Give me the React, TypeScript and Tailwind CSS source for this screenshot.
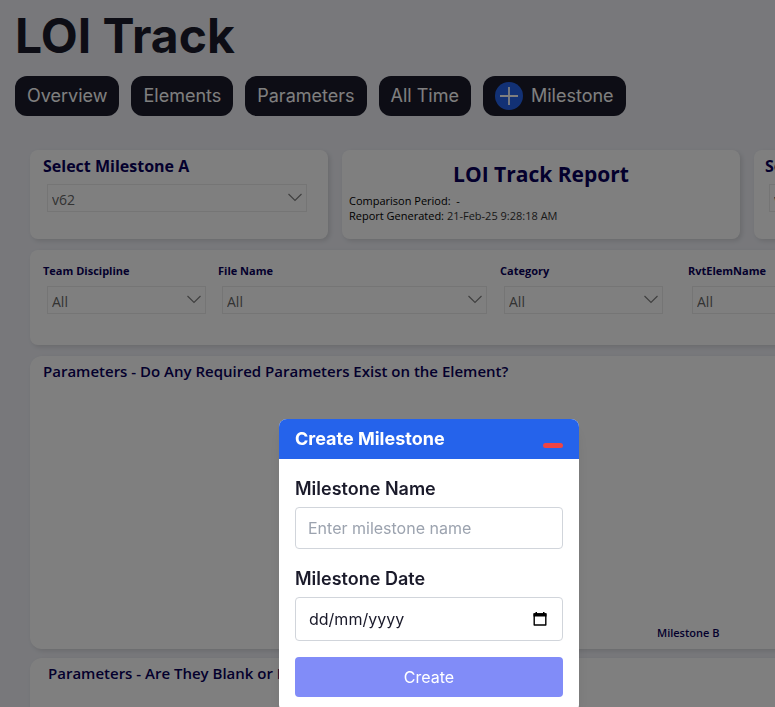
import React, { useState } from 'react'

interface FilterProps {
  id: string
  label: string
  className: string
}

const Chevron: React.FC = () => (
  <svg
    className="pointer-events-none absolute right-1 top-2 h-3 w-4"
    viewBox="0 0 16 12"
    fill="none"
    stroke="#808080"
    strokeWidth="1.2"
  >
    <path d="M1.500 2 8 8.500 14.500 2" />
  </svg>
)

const SelectBox: React.FC<{ id: string; value: string }> = ({ id, value }) => (
  <div className="relative ml-1">
    <select
      id={id}
      className="block h-7 w-full appearance-none border border-[#ebebeb] bg-white pl-1 pt-1 text-sm leading-5 text-[#666666]"
    >
      <option>{value}</option>
    </select>
    <Chevron />
  </div>
)

const Filter: React.FC<FilterProps> = ({ id, label, className }) => (
  <div className={className}>
    <label htmlFor={id} className="mb-[7px] block text-[11px] leading-4 font-bold text-[#08005a]">
      {label}
    </label>
    <SelectBox id={id} value="All" />
  </div>
)

const NavButton: React.FC<{ children: React.ReactNode }> = ({ children }) => (
  <button className="flex h-10 shrink-0 items-center gap-2 rounded-xl bg-[#1a1a2a] px-3 text-lg text-white">
    {children}
  </button>
)

const Report: React.FC = () => (
  <main className="flex w-[1024px] flex-col text-black [font-family:'Open_Sans','Noto_Sans',sans-serif]">
    <div className="mb-[11px] flex gap-[14px]">
      <section className="h-[89px] w-[298px] shrink-0 rounded-lg bg-white pl-[13px] pr-[21px] pt-[3px] shadow-[2px_2px_5px_rgba(0,0,0,0.12)]">
        <label htmlFor="milestone-a" className="mb-[5px] block text-base leading-[26px] font-bold text-[#08005a]">
          Select Milestone A
        </label>
        <SelectBox id="milestone-a" value="v62" />
      </section>
      <section className="h-[89px] w-[398px] shrink-0 rounded-lg bg-white px-[7px] pt-2 shadow-[2px_2px_5px_rgba(0,0,0,0.12)]">
        <h2 className="mb-[3px] text-center text-[21px] leading-8 font-bold text-[#08005a]">LOI Track Report</h2>
        <p className="text-[11px] leading-[15px]">Comparison Period: &nbsp;-</p>
        <p className="text-[11px] leading-[15px]">
          Report Generated: <span className="text-[#333333]">21-Feb-25 9:28:18 AM</span>
        </p>
      </section>
      <section className="h-[89px] w-[298px] shrink-0 rounded-lg bg-white pl-[11px] pr-[21px] pt-[3px] shadow-[2px_2px_5px_rgba(0,0,0,0.12)]">
        <label htmlFor="milestone-b" className="mb-[5px] block text-base leading-[26px] font-bold text-[#08005a]">
          Select Milestone B
        </label>
        <SelectBox id="milestone-b" value="v63" />
      </section>
    </div>

    <section className="mb-[11px] flex h-[95px] rounded-lg bg-white pl-[13px] pt-[13px] shadow-[2px_2px_5px_rgba(0,0,0,0.12)]">
      <Filter id="discipline" label="Team Discipline" className="mr-3 w-[163px] shrink-0" />
      <Filter id="file" label="File Name" className="mr-[13px] w-[269px] shrink-0" />
      <Filter id="category" label="Category" className="mr-[25px] w-[163px] shrink-0" />
      <Filter id="element" label="RvtElemName" className="w-[163px] shrink-0" />
    </section>

    <section className="mb-[9px] flex h-[293px] flex-col justify-between rounded-xl bg-white pb-2 pl-[13px] pt-1 shadow-[2px_2px_5px_rgba(0,0,0,0.12)]">
      <h3 className="text-[15px] leading-[22px] font-semibold text-[#08005a]">
        Parameters - Do Any Required Parameters Exist on the Element?
      </h3>
      <p className="pl-[614px] text-[11px] leading-4 font-semibold text-[#08005a]">Milestone B</p>
    </section>

    <section className="h-[293px] rounded-xl bg-white pl-[18px] pt-1 shadow-[2px_2px_5px_rgba(0,0,0,0.12)]">
      <h3 className="text-[15px] leading-[22px] font-semibold text-[#08005a]">Parameters - Are They Blank or Not?</h3>
    </section>
  </main>
)

const MilestoneDialog: React.FC = () => {
  const [name, setName] = useState('')
  const [date, setDate] = useState('')

  return (
    <div
      role="dialog"
      aria-label="Create Milestone"
      className="absolute left-[279px] top-[419px] w-[300px] rounded-lg bg-white text-[#1a1a2a] shadow-lg"
    >
      <div className="flex h-10 items-center justify-between rounded-t-lg bg-[#2563eb] px-4">
        <h2 className="text-lg font-bold text-white">Create Milestone</h2>
        <button aria-label="Minimize" className="pt-[13px]">
          <span className="block h-[5px] w-5 rounded-sm bg-[#ef4444]" />
        </button>
      </div>
      <form className="p-4">
        <label htmlFor="name" className="mb-1 block text-lg leading-7 font-semibold">
          Milestone Name
        </label>
        <input
          id="name"
          value={name}
          onChange={(e) => setName(e.target.value)}
          placeholder="Enter milestone name"
          className="mb-4 block w-full rounded border border-[#d1d5db] px-3 py-2 text-base placeholder:text-[#9ca3af]"
        />
        <label htmlFor="date" className="mb-1 block text-lg leading-7 font-semibold">
          Milestone Date
        </label>
        <div className="mb-4 flex h-11 items-center rounded border border-[#d1d5db] px-3">
          <input
            id="date"
            value={date}
            onChange={(e) => setDate(e.target.value)}
            placeholder="dd/mm/yyyy"
            className="w-full min-w-0 pl-px text-base placeholder:text-[#1a1a2a]"
          />
          <button type="button" aria-label="Pick a date" className="mr-[2px]">
            <svg className="h-4 w-4" viewBox="0 0 16 16" fill="none">
              <path d="M2.200 3h11.600v11H2.200z" stroke="#000" strokeWidth="1.4" strokeLinejoin="round" />
              <path d="M1.500 2.300h13V5.500h-13zM3.500 1H5v2H3.500zM11 1h1.500v2H11z" fill="#000" />
            </svg>
          </button>
        </div>
        <button type="button" className="block h-10 w-full rounded bg-[#818cf8] text-base text-white">
          Create
        </button>
      </form>
    </div>
  )
}

export default function App() {
  return (
    <div className="relative h-screen overflow-hidden bg-[#f0f1f7] [font-family:Inter,sans-serif]">
      <header className="px-[15px] pt-3">
        <h1 className="mb-4 text-5xl font-bold text-[#1a1a2a]">LOI Track</h1>
        <nav className="flex gap-3">
          <NavButton>Overview</NavButton>
          <NavButton>Elements</NavButton>
          <NavButton>Parameters</NavButton>
          <NavButton>All Time</NavButton>
          <NavButton>
            <svg className="h-7 w-7" viewBox="0 0 28 28" fill="none">
              <circle cx="14" cy="14" r="14" fill="#2563eb" />
              <path d="M14 5v18M5 14h18" stroke="#fff" strokeWidth="1.8" />
            </svg>
            Milestone
          </NavButton>
        </nav>
      </header>
      <div className="pl-[30px] pt-[34px]">
        <Report />
      </div>
      <div className="fixed inset-0 bg-black/50">
        <MilestoneDialog />
      </div>
    </div>
  )
}
